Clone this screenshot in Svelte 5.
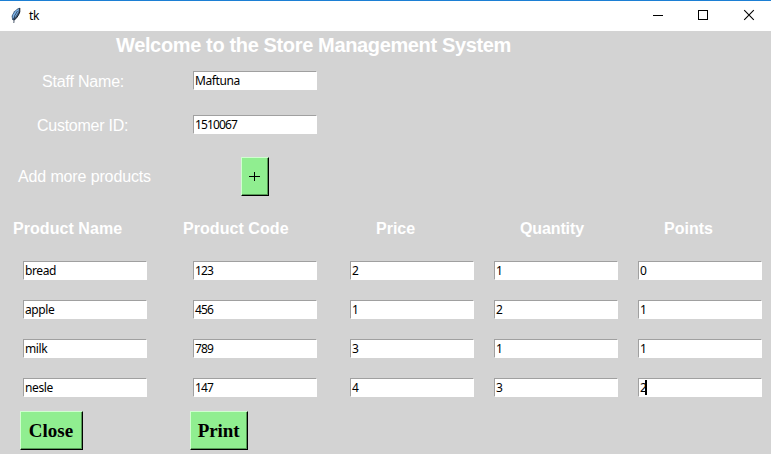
<script>
  const headers = [
    { text: 'Product Name', indent: 13, spacing: 0.06 },
    { text: 'Product Code', indent: 13, spacing: 0.06 },
    { text: 'Price', indent: 49, spacing: 0 },
    { text: 'Quantity', indent: 49, spacing: -0.12 },
    { text: 'Points', indent: 49, spacing: 0 }
  ];
  const rows = [
    ['bread', '123', '2', '1', '0'],
    ['apple', '456', '1', '2', '1'],
    ['milk', '789', '3', '1', '1'],
    ['nesle', '147', '4', '3', '2']
  ];
</script>

<div class="window">
  <header class="titlebar">
    <svg class="feather" width="12" height="18" viewBox="0 0 12 18">
      <path d="M2.2 13 L1.6 9 L4 4.5 L8 1.2 L9.8 0.8 L9.8 5 L8.5 8 L6.5 11 L4 13 Z" fill="#3c5878" />
      <path d="M2.6 11.5 L2.8 8 L5.5 4 L9 1.6 L8.3 5 L5.5 9.5 Z" fill="#7fb5ea" />
      <path d="M9.8 1 L9.8 5 L8.3 8.4 L6 11.6 L3.6 13.2" fill="none" stroke="#17202c" />
      <path d="M7.5 4 L4.5 9 L3.8 16" fill="none" stroke="#24364c" stroke-width="0.8" />
    </svg>
    <span class="caption">tk</span>
    <svg class="controls" width="110" height="12" viewBox="0 0 110 12" fill="none" stroke="#000">
      <path d="M2 6.5 H12" shape-rendering="crispEdges" />
      <rect x="47.5" y="1.5" width="9" height="9" shape-rendering="crispEdges" />
      <path d="M93.2 1.2 L102.8 10.8 M102.8 1.2 L93.2 10.8" stroke-width="1.1" />
    </svg>
  </header>

  <main>
    <h1>Welcome to the Store Management System</h1>
    <div class="row form">
      <label class="staff" for="staff">Staff Name:</label>
      <div id="staff" class="entry">Maftuna</div>
    </div>
    <div class="row form">
      <label class="customer" for="customer">Customer ID:</label>
      <div id="customer" class="entry numeric">1510067</div>
    </div>
    <div class="row add">
      <span class="label">Add more products</span>
      <button class="plus" aria-label="Add">
        <svg width="11" height="11" viewBox="0 0 11 11" shape-rendering="crispEdges"><path d="M0 5.5 H11 M5.5 1 V10" stroke="#000" /></svg>
      </button>
    </div>
    <div class="row heads">
      {#each headers as h}
        <strong style:padding-left="{h.indent}px" style:letter-spacing="{h.spacing}px">{h.text}</strong>
      {/each}
    </div>
    {#each rows as row, r}
      <div class="row product">
        {#each row as value, c}
          <div class="entry" class:numeric={c > 0}>{value}{#if r === 3 && c === 4}<i class="caret"></i>{/if}</div>
        {/each}
      </div>
    {/each}
    <div class="row actions">
      <button class="close">Close</button>
      <button class="print">Print</button>
    </div>
  </main>
</div>

<style>
  .window {
    width: 771px;
    height: 454px;
    overflow: hidden;
    background: #d3d3d3;
    font-family: "Liberation Sans", Arial, sans-serif;
  }
  .titlebar {
    box-sizing: border-box;
    height: 31px;
    display: flex;
    align-items: center;
    border-top: 1px solid #1c7fd4;
    background: #fff;
  }
  .feather { margin-left: 10px; margin-top: -1px; }
  .caption {
    margin-left: 7px;
    margin-top: -1px;
    font: 12px "Noto Sans", sans-serif;
    letter-spacing: -0.3px;
    color: #000;
  }
  .controls { margin-left: auto; margin-right: 10px; margin-top: -2px; }
  main { color: #fff; font-size: 16px; }
  h1 {
    margin: 0;
    padding-left: 116px;
    height: 28px;
    line-height: 28px;
    font-size: 20px;
    font-weight: bold;
    letter-spacing: -0.36px;
    white-space: nowrap;
  }
  .row {
    display: grid;
    grid-template-columns: 170px 157px 144px 144px 156px;
    white-space: nowrap;
  }
  .form { height: 44px; line-height: 45px; }
  .form .entry { margin-top: 12px; }
  .staff { padding-left: 42px; letter-spacing: -0.19px; }
  .customer { padding-left: 37px; letter-spacing: -0.26px; }
  .add { height: 59px; line-height: 60px; }
  .label { padding-left: 18px; letter-spacing: -0.13px; }
  .heads { height: 45px; line-height: 45px; }
  .product { height: 39px; }
  .entry {
    box-sizing: border-box;
    width: 124px;
    height: 19px;
    margin: 10px 0 0 23px;
    padding-left: 1px;
    border: 1px solid #fff;
    border-top-color: #a0a0a0;
    border-left-color: #a0a0a0;
    background: #fff;
    color: #000;
    font: 12px/18px "Noto Sans", sans-serif;
    letter-spacing: -0.4px;
    display: flex;
  }
  .numeric { letter-spacing: -0.85px; }
  .caret { width: 2px; height: 15px; margin: 1px 0 0 -1px; background: #000; }
  button {
    box-sizing: border-box;
    height: 39px;
    padding: 0;
    border: 1px solid #000;
    border-top-color: #d0ffd0;
    border-left-color: #d0ffd0;
    border-radius: 0;
    background: #90ee90;
    box-shadow: inset -1px -1px #559955;
    color: #000;
    font: bold 19px/36px "Liberation Serif", serif;
  }
  .plus {
    width: 28px;
    margin: 10px 0 0 71px;
    padding-right: 1px;
    display: flex;
    align-items: center;
    justify-content: center;
  }
  .actions { height: 47px; }
  .close { width: 63px; margin: 4px 0 0 20px; padding-right: 1px; }
  .print { width: 58px; margin: 4px 0 0 20px; padding-right: 1px; letter-spacing: -0.1px; }
</style>
